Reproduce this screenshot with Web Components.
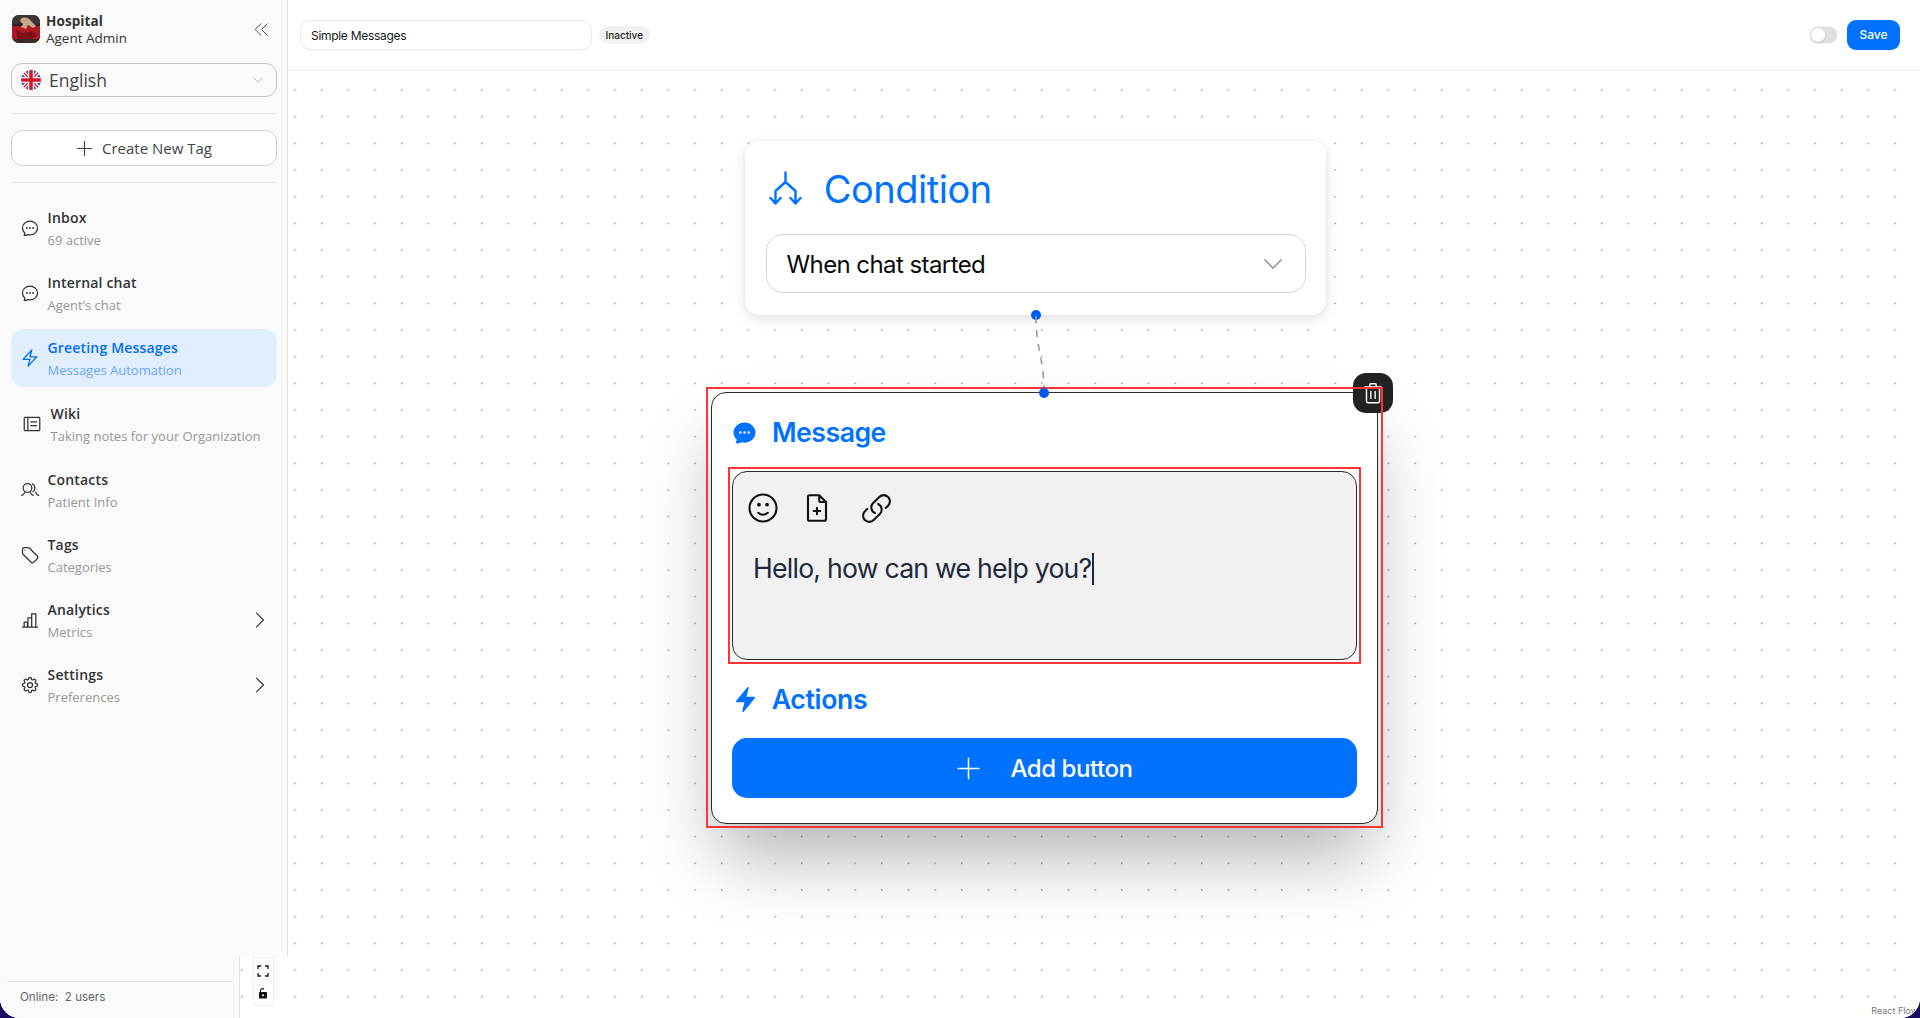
<!DOCTYPE html>
<html lang="en">
<head>
<meta charset="utf-8">
<title>Greeting Messages</title>
<style>
  html, body { margin: 0; height: 100%; background: #160a5e; overflow: hidden; }
</style>
</head>
<body>
<app-shell>
  <flow-canvas slot="canvas">
    <condition-node></condition-node>
    <message-node>Hello, how can we help you?</message-node>
  </flow-canvas>
  <side-bar slot="side">
    <nav-item><ui-icon slot="icon" name="chat"></ui-icon>Inbox<span slot="sub">69 active</span></nav-item>
    <nav-item><ui-icon slot="icon" name="chat"></ui-icon>Internal chat<span slot="sub">Agent’s chat</span></nav-item>
    <nav-item active><ui-icon slot="icon" name="bolt"></ui-icon>Greeting Messages<span slot="sub">Messages Automation</span></nav-item>
    <nav-item wide><ui-icon slot="icon" name="book"></ui-icon>Wiki<span slot="sub">Taking notes for your Organization</span></nav-item>
    <nav-item><ui-icon slot="icon" name="users"></ui-icon>Contacts<span slot="sub">Patient Info</span></nav-item>
    <nav-item><ui-icon slot="icon" name="tag"></ui-icon>Tags<span slot="sub">Categories</span></nav-item>
    <nav-item more><ui-icon slot="icon" name="chart"></ui-icon>Analytics<span slot="sub">Metrics</span></nav-item>
    <nav-item more><ui-icon slot="icon" name="cog"></ui-icon>Settings<span slot="sub">Preferences</span></nav-item>
  </side-bar>
  <side-footer slot="foot">Online:&nbsp; 2 users</side-footer>
  <flow-controls slot="controls"></flow-controls>
  <top-bar slot="top"></top-bar>
</app-shell>

<script>
// outline and solid icons, all on a 24 box
const ICONS = {
  chat: '<path d="M8.625 12a.375.375 0 1 1-.75 0 .375.375 0 0 1 .75 0Zm0 0H8.25m4.125 0a.375.375 0 1 1-.75 0 .375.375 0 0 1 .75 0Zm0 0H12m4.125 0a.375.375 0 1 1-.75 0 .375.375 0 0 1 .75 0Zm0 0h-.375M21 12c0 4.556-4.03 8.25-9 8.25a9.764 9.764 0 0 1-2.555-.337A5.972 5.972 0 0 1 5.41 20.97a5.969 5.969 0 0 1-.474-.065 4.48 4.48 0 0 0 .978-2.025c.09-.457-.133-.901-.467-1.226C3.93 16.178 3 14.189 3 12c0-4.556 4.03-8.25 9-8.25s9 3.694 9 8.25Z"/>',
  bolt: '<path d="m3.75 13.5 10.5-11.25L12 10.5h8.25L9.75 21.75 12 13.5H3.75Z"/>',
  book: '<path d="M3.5 4h17a.8.8 0 0 1 .8.8v14.4a.8.8 0 0 1-.8.8h-17a.8.8 0 0 1-.8-.8V4.800a.8.8 0 0 1 .8-.8ZM7 4v16M10.500 9.500h7M10.500 14h7"/>',
  users: '<circle cx="9" cy="9.500" r="5.200"/><path d="M14.800 4.700a5.200 5.200 0 0 1 .6 9.300M2 18.500c1.500-.4 3-1.500 3.800-4M16 18.500c-1.500-.4-3-1.500-3.800-4M22.500 18.500c-1.500-.4-3-1.500-3.800-4"/>',
  tag: '<path d="M9.568 3H5.250A2.250 2.250 0 0 0 3 5.250v4.318c0 .597.237 1.170.659 1.591l9.581 9.581c.699.699 1.780.872 2.607.330a18.095 18.095 0 0 0 5.223-5.223c.542-.827.369-1.908-.330-2.607L11.160 3.660A2.250 2.250 0 0 0 9.568 3Z"/><path d="M6 6h.008v.008H6V6Z"/>',
  chart: '<path d="M3 20.500h18M5 20.500v-6h4v6M9.500 20.500V9.500h4.500v11M14 20.500V4.500h5v16"/>',
  cog: '<path d="M10.343 3.940c.09-.542.56-.94 1.110-.94h1.093c.55 0 1.020.398 1.110.94l.149.894c.07.424.384.764.78.93.398.164.855.142 1.205-.108l.737-.527a1.125 1.125 0 0 1 1.450.120l.773.774c.39.389.44 1.002.12 1.450l-.527.737c-.25.35-.272.806-.107 1.204.165.397.505.71.93.78l.893.15c.543.09.94.56.94 1.109v1.094c0 .55-.397 1.020-.94 1.110l-.893.149c-.425.07-.765.383-.93.78-.165.398-.143.854.107 1.204l.527.738c.32.447.269 1.060-.12 1.450l-.774.773a1.125 1.125 0 0 1-1.449.120l-.738-.527c-.35-.25-.806-.272-1.203-.107-.397.165-.71.505-.781.929l-.149.894c-.09.542-.56.94-1.110.94h-1.094c-.55 0-1.019-.398-1.110-.94l-.148-.894c-.071-.424-.384-.764-.781-.93-.398-.164-.854-.142-1.204.108l-.738.527c-.447.32-1.060.269-1.450-.120l-.773-.774a1.125 1.125 0 0 1-.12-1.450l.527-.737c.25-.35.273-.806.108-1.204-.165-.397-.505-.71-.93-.78l-.894-.15c-.542-.09-.94-.56-.94-1.109v-1.094c0-.55.398-1.020.94-1.110l.894-.149c.424-.07.765-.383.93-.78.165-.398.143-.854-.107-1.204l-.527-.738a1.125 1.125 0 0 1 .12-1.450l.773-.773a1.125 1.125 0 0 1 1.450-.12l.737.527c.35.25.807.272 1.204.107.397-.165.71-.505.78-.929l.15-.894Z"/><path d="M15 12a3 3 0 1 1-6 0 3 3 0 0 1 6 0Z"/>',
  plus: '<path d="M12 4.500v15m7.500-7.500h-15"/>',
  smile: '<path d="M15.182 15.182a4.500 4.500 0 0 1-6.364 0M21 12a9 9 0 1 1-18 0 9 9 0 0 1 18 0Z"/><circle cx="9.300" cy="9.750" r=".55" fill="currentColor"/><circle cx="14.700" cy="9.750" r=".55" fill="currentColor"/>',
  file: '<path d="M13.500 3.500H7A1 1 0 0 0 6 4.500v15a1 1 0 0 0 1 1h10a1 1 0 0 0 1-1V8l-4.500-4.500ZM13.500 3.500V7a1 1 0 0 0 1 1H18M12 11.800v4.400M9.800 14h4.400"/>',
  link: '<path d="M13.190 8.688a4.500 4.500 0 0 1 1.242 7.244l-4.500 4.500a4.500 4.500 0 0 1-6.364-6.364l1.757-1.757m13.350-.622 1.757-1.757a4.500 4.500 0 0 0-6.364-6.364l-4.500 4.500a4.500 4.500 0 0 0 1.242 7.244"/>',
  trash: '<path d="M4.500 6.500h15M9 6.500V4.800c0-.7.5-1.300 1.200-1.300h3.600c.7 0 1.200.6 1.200 1.300v1.700M6 6.500v13.200c0 .7.5 1.300 1.200 1.300h9.600c.7 0 1.200-.6 1.200-1.300V6.500M10 10.500v6.500M14 10.500v6.500"/>',
  right: '<path d="m8.250 4.500 7.500 7.500-7.500 7.500"/>',
  down: '<path d="m4.500 8.250 7.500 7.500 7.500-7.500"/>',
  collapse: '<path d="M11 5 4 12l7 7M19 5l-7 7 7 7"/>'
};

class UiIcon extends HTMLElement {
  connectedCallback() {
    const size = this.getAttribute('size') || 20;
    const stroke = this.getAttribute('stroke') || 1.5;
    this.attachShadow({ mode: 'open' }).innerHTML = `
      <style>:host { display: inline-flex; flex: none; } svg { display: block; }</style>
      <svg width="${size}" height="${size}" viewBox="0 0 24 24" fill="none" stroke="currentColor"
        stroke-width="${stroke}" stroke-linecap="round" stroke-linejoin="round">${ICONS[this.getAttribute('name')]}</svg>`;
  }
}

class AppShell extends HTMLElement {
  constructor() {
    super();
    this.attachShadow({ mode: 'open' }).innerHTML = `
      <style>
        :host {
          display: grid;
          grid-template-columns: 288px 1fr;
          position: relative;
          width: 1920px;
          height: 1018px;
          overflow: hidden;
          border-radius: 0 0 20px 20px;
          background: #fff;
        }
        .left, .right { position: relative; z-index: 1; min-width: 0; }
        .left { display: flex; flex-direction: column; height: 1018px; }
        .under { display: flex; flex: 1; }
      </style>
      <slot name="canvas"></slot>
      <div class="left">
        <slot name="side"></slot>
        <div class="under">
          <slot name="foot"></slot>
          <slot name="controls"></slot>
        </div>
      </div>
      <div class="right"><slot name="top"></slot></div>`;
  }
}

class SideBar extends HTMLElement {
  constructor() {
    super();
    this.attachShadow({ mode: 'open' }).innerHTML = `
      <style>
        :host {
          display: flex;
          flex-direction: column;
          box-sizing: border-box;
          height: 957px;
          padding: 15px 10px 0 11px;
          background: #fafafa;
          border-right: 1px solid #e4e4e4;
          font-family: "Open Sans", sans-serif;
          color: #333;
        }
        .brand { display: flex; align-items: center; height: 28px; gap: 6px; padding-left: 1px; }
        .brand svg.avatar { display: block; flex: none; }
        .who { display: flex; flex-direction: column; flex: 1; font-size: 13.5px; line-height: 17px; margin-top: 2px; }
        .who b { font-weight: 700; letter-spacing: .1px; }
        .collapse { color: #333; margin-right: 6px; }
        .lang {
          display: flex;
          align-items: center;
          box-sizing: border-box;
          height: 34px;
          margin-top: 20px;
          padding: 0 11px 0 9px;
          border: 1px solid #c8c8c8;
          border-radius: 11px;
          font-size: 17.5px;
          font-weight: 500;
          gap: 8px;
          color: #444;
        }
        .lang span { flex: 1; }
        .lang ui-icon { color: #a9a9a9; }
        hr { border: 0; border-top: 1px solid #e9e9e9; margin: 16px 0; width: 100%; }
        .create {
          display: flex;
          align-items: center;
          justify-content: center;
          box-sizing: border-box;
          height: 36px;
          padding-right: 3px;
          gap: 6px;
          background: #fff;
          border: 1px solid #cfcfcf;
          border-radius: 11px;
          font-size: 15px;
          font-weight: 500;
          color: #444;
        }
        .nav { display: flex; flex-direction: column; gap: 7px; }
      </style>
      <div class="brand">
        <svg class="avatar" width="28" height="28" viewBox="0 0 28 28">
          <defs><clipPath id="av"><rect width="28" height="28" rx="7"/></clipPath></defs>
          <g clip-path="url(#av)">
            <rect width="28" height="28" fill="#2a1c1c"/>
            <rect y="11" width="28" height="13" fill="#b01822"/>
            <path d="M0 0h28v9l-8 2-10-3-10 2z" fill="#3d3434"/>
            <path d="M9 4c3-3 8-1 10 2l5 5-3 2-5-3-2 4-5-2 2-3-3-3z" fill="#c9a58c"/>
            <path d="M3 14l8 4 9-2 5 4-6 5H6z" fill="#7d1018"/>
            <rect y="24" width="28" height="4" fill="#3b2a26"/>
          </g>
        </svg>
        <div class="who"><b>Hospital</b><span>Agent Admin</span></div>
        <ui-icon class="collapse" name="collapse" size="19" stroke="1.1"></ui-icon>
      </div>
      <div class="lang">
        <svg width="20" height="20" viewBox="0 0 20 20">
          <defs><clipPath id="fl"><circle cx="10" cy="10" r="10"/></clipPath></defs>
          <g clip-path="url(#fl)">
            <rect width="20" height="20" fill="#2a50a8"/>
            <path d="M0 0l20 20M20 0L0 20" stroke="#fff" stroke-width="4"/>
            <path d="M0 0l20 20M20 0L0 20" stroke="#d8152f" stroke-width="1.400"/>
            <path d="M10 0v20M0 10h20" stroke="#fff" stroke-width="6"/>
            <path d="M10 0v20M0 10h20" stroke="#d8152f" stroke-width="3.600"/>
          </g>
        </svg>
        <span>English</span>
        <ui-icon name="down" size="14" stroke="1.4"></ui-icon>
      </div>
      <hr>
      <div class="create"><ui-icon name="plus" size="23" stroke="1.2"></ui-icon>Create New Tag</div>
      <hr>
      <div class="nav"><slot></slot></div>`;
  }
}

class NavItem extends HTMLElement {
  constructor() {
    super();
    this.attachShadow({ mode: 'open' }).innerHTML = `
      <style>
        :host {
          display: flex;
          align-items: center;
          box-sizing: border-box;
          height: 58px;
          padding: 0 6px 0 9px;
          gap: 7.500px;
          border-radius: 12px;
          color: #333;
        }
        :host([wide]) { margin: 1px 0; padding-left: 11px; gap: 8.500px; }
        :host([active]) { background: #e0eeff; color: #006fee; }
        .text { display: flex; flex-direction: column; flex: 1; min-width: 0; font-size: 14px; font-weight: 550; letter-spacing: .18px; line-height: 22px; margin-top: 1px; }
        .sub { font-size: 13px; font-weight: 400; letter-spacing: 0; color: #979797; }
        :host([active]) .sub { color: #68a6f7; }
        .more { display: none; color: #333; }
        :host([more]) .more { display: block; }
      </style>
      <slot name="icon"></slot>
      <div class="text"><slot></slot><div class="sub"><slot name="sub"></slot></div></div>
      <ui-icon class="more" name="right" size="22" stroke="1.200"></ui-icon>`;
  }
}

class SideFooter extends HTMLElement {
  constructor() {
    super();
    this.attachShadow({ mode: 'open' }).innerHTML = `
      <style>
        :host {
          display: block;
          box-sizing: border-box;
          width: 240px;
          height: 61px;
          padding: 24px 6px 0 7px;
          background: #fafafa;
          border-right: 1px solid #e4e4e4;
          font: 11.600px Inter, sans-serif;
          color: #666;
        }
        div { border-top: 1px solid #e6e6e6; padding: 4px 0 0 13px; line-height: 22px; }
      </style>
      <div><slot></slot></div>`;
  }
}

class FlowControls extends HTMLElement {
  constructor() {
    super();
    this.attachShadow({ mode: 'open' }).innerHTML = `
      <style>
        :host {
          display: flex;
          flex-direction: column;
          box-sizing: border-box;
          width: 22px;
          height: 49px;
          margin-left: 12px;
          background: #fefefe;
          border: solid #f1f1f1;
          border-width: 0 1px 1px 1px;
          border-radius: 0 0 3px 3px;
        }
        div { display: flex; align-items: center; justify-content: center; box-sizing: border-box; height: 22px; padding-top: 4px; border-top: 1px solid #f1f1f1; }
        div:first-child { margin-top: 4px; }
      </style>
      <div><svg width="12" height="12" viewBox="0 0 12 12" fill="none" stroke="#111" stroke-width="1.300" stroke-linecap="round"><path d="M1 3.500V1h2.500M8.500 1H11v2.500M11 8.500V11H8.500M3.500 11H1V8.500"/></svg></div>
      <div><svg width="10" height="12" viewBox="0 0 10 12"><path d="M2.500 5V3.500A2 2 0 0 1 6 2.300" fill="none" stroke="#111" stroke-width="1.100"/><rect x="1" y="5" width="8" height="6.500" rx=".8" fill="#111"/><circle cx="5" cy="8.200" r="1" fill="#fff"/></svg></div>`;
  }
}

class TopBar extends HTMLElement {
  constructor() {
    super();
    this.attachShadow({ mode: 'open' }).innerHTML = `
      <style>
        :host {
          display: flex;
          align-items: center;
          box-sizing: border-box;
          height: 71px;
          padding: 0 20px 0 12px;
          background: #fff;
          border-bottom: 1px solid #ececec;
          font-family: Inter, sans-serif;
        }
        .name {
          box-sizing: border-box;
          width: 292px;
          height: 30px;
          padding: 1px 10px 0;
          line-height: 28px;
          border: 1px solid #e9e9e9;
          border-radius: 10px;
          box-shadow: 0 1px 2px rgba(0,0,0,.03);
          font-size: 12px;
          letter-spacing: -.3px;
          color: #18181b;
        }
        .badge {
          margin-left: 7px;
          padding: 0 6.500px;
          height: 18px;
          line-height: 18px;
          border-radius: 9px;
          background: #f1f1f2;
          font-size: 10px;
          font-weight: 500;
          color: #222;
        }
        .grow { flex: 1; }
        .switch { position: relative; width: 27px; height: 16px; border-radius: 8px; background: #dfdfe1; box-shadow: 0 0 0 1px #f2f2f2; }
        .switch::after { content: ""; position: absolute; left: 1px; top: 1px; width: 14px; height: 14px; border-radius: 50%; background: #fff; box-shadow: 0 1px 2px rgba(0,0,0,.15); }
        .save {
          margin-left: 10px;
          width: 53px;
          height: 30px;
          line-height: 30px;
          text-align: center;
          border-radius: 9px;
          background: #0072ff;
          color: #fff;
          font-size: 12px;
          font-weight: 500;
        }
      </style>
      <div class="name">Simple Messages</div>
      <div class="badge">Inactive</div>
      <div class="grow"></div>
      <div class="switch"></div>
      <div class="save">Save</div>`;
  }
}

class FlowCanvas extends HTMLElement {
  constructor() {
    super();
    this.attachShadow({ mode: 'open' }).innerHTML = `
      <style>
        :host { position: absolute; inset: 0; background: #fff; font-family: Inter, sans-serif; }
        svg { position: absolute; inset: 0; }
        .credit {
          position: absolute;
          right: 2px;
          bottom: 1px;
          padding: 2px 0 1px 4px;
          background: rgba(255,255,255,.6);
          font-size: 9px;
          color: #777;
        }
      </style>
      <svg width="1920" height="1018">
        <defs>
          <pattern id="dots" x="0" y="0" width="26.667" height="26.667" patternUnits="userSpaceOnUse">
            <circle cx="1.667" cy="10" r=".9" fill="#9a9a9f"/>
          </pattern>
        </defs>
        <rect width="1920" height="1018" fill="url(#dots)"/>
      </svg>
      <slot></slot>
      <svg width="1920" height="1018" style="pointer-events:none">
        <path d="M1036 316 C1036 350 1044 358 1044 392" fill="none" stroke="#9a9a9f" stroke-width="1.600" stroke-dasharray="7 7"/>
      </svg>
      <div class="credit">React Flow</div>`;
  }
}

class ConditionNode extends HTMLElement {
  constructor() {
    super();
    this.attachShadow({ mode: 'open' }).innerHTML = `
      <style>
        :host {
          position: absolute;
          left: 745px;
          top: 141px;
          box-sizing: border-box;
          width: 581px;
          height: 174px;
          padding: 0 20.500px;
          background: #fff;
          border-radius: 14px;
          box-shadow: 0 4px 14px rgba(0,0,0,.11), 0 0 4px rgba(0,0,0,.05);
        }
        .head { display: flex; align-items: center; height: 93px; padding: 2px 0 0 3px; box-sizing: border-box; gap: 22.300px; color: #0072ff; font-size: 38px; letter-spacing: -.5px; }
        .head svg { display: block; flex: none; margin-top: -1px; }
        .select {
          display: flex;
          align-items: center;
          justify-content: space-between;
          box-sizing: border-box;
          height: 59px;
          padding: 2px 19px 0 20px;
          border: 1px solid #d6d6d8;
          border-radius: 17px;
          font-size: 24px;
          letter-spacing: -.58px;
          color: #0a0a0a;
        }
        .select ui-icon { color: #a1a1aa; margin-top: -2px; }
        .handle { position: absolute; left: 285.500px; bottom: -5px; width: 10px; height: 10px; border-radius: 50%; background: #0058f5; }
      </style>
      <div class="head">
        <svg width="33" height="34" viewBox="0 0 33 34" fill="none" stroke="currentColor" stroke-width="2.400" stroke-linecap="round" stroke-linejoin="round">
          <path d="M16.500 1.500v9.500M16.500 11 6.500 20v12M16.500 11l10 9v12M1.500 27l5 5.500 5-5.500M21.500 27l5 5.500 5-5.500"/>
        </svg>
        Condition
      </div>
      <div class="select">When chat started<ui-icon name="down" size="26" stroke="1.600"></ui-icon></div>
      <div class="handle"></div>`;
  }
}

class MessageNode extends HTMLElement {
  constructor() {
    super();
    this.attachShadow({ mode: 'open' }).innerHTML = `
      <style>
        :host {
          position: absolute;
          left: 706px;
          top: 387px;
          box-sizing: border-box;
          width: 677px;
          height: 441px;
          padding: 5px 5px 4px 5px;
        }
        :host::after {
          content: "";
          position: absolute;
          inset: 0;
          border: 2px solid #ff3434;
          z-index: 3;
        }
        .card {
          display: flex;
          flex-direction: column;
          box-sizing: border-box;
          height: 100%;
          padding: 21px 16px 25px;
          background: #fff;
          border: 1px solid #2a2a2a;
          border-radius: 15px;
          box-shadow: 0 40px 72px -8px rgba(0,0,0,.3);
        }
        .head { display: flex; align-items: center; height: 36px; padding-left: 3px; gap: 14px; color: #0072ff; font-size: 26.670px; font-weight: 600; letter-spacing: -.5px; }
        .head svg { display: block; flex: none; }
        .head.actions { margin-top: 17px; padding-left: 7.700px; gap: 17px; letter-spacing: -.35px; }
        .editor-box { margin-top: 17px; height: 197px; box-sizing: border-box; padding: 2px; border: 2px solid #ff3434; }
        .editor {
          box-sizing: border-box;
          height: 100%;
          padding: 18px 12px 0;
          background: #f1f1f2;
          border: 1px solid #2a2a2a;
          border-radius: 15px;
          color: #111;
        }
        .tools { display: flex; align-items: center; height: 36px; gap: 17.500px; }
        .tools ui-icon:last-child { margin-left: 8px; }
        .text { margin: 22px 0 0 8px; font-size: 26.670px; line-height: 40px; letter-spacing: -.78px; color: #1e293b; white-space: nowrap; }
        .caret { display: inline-block; width: 2px; height: 32px; margin-left: 1px; background: #1e293b; vertical-align: -7px; }
        .add {
          display: flex;
          align-items: center;
          justify-content: center;
          height: 60px;
          margin: 21px 4px 0;
          padding-right: 4px;
          gap: 25px;
          background: #0072ff;
          border-radius: 15px;
          color: #fff;
          font-size: 24px;
          font-weight: 500;
          letter-spacing: -.45px;
        }
        .trash {
          position: absolute;
          left: 647px;
          top: -14px;
          display: flex;
          align-items: center;
          justify-content: center;
          width: 40px;
          height: 40px;
          border-radius: 13px;
          background: #222;
          color: #fff;
          z-index: 2;
        }
        .handle { position: absolute; left: 333px; top: 1px; width: 10px; height: 10px; border-radius: 50%; background: #0058f5; z-index: 4; }
      </style>
      <div class="card">
        <div class="head">
          <svg width="27" height="27" viewBox="0 0 24 24" fill="currentColor"><path fill-rule="evenodd" d="M4.804 21.644A6.707 6.707 0 0 0 6 21.750a6.721 6.721 0 0 0 3.583-1.029c.774.182 1.584.279 2.417.279 5.322 0 9.750-3.970 9.750-9 0-5.030-4.428-9-9.750-9s-9.750 3.970-9.750 9c0 2.409 1.025 4.587 2.674 6.192.232.226.277.428.254.543a3.730 3.730 0 0 1-.814 1.686.750.750 0 0 0 .44 1.223ZM8.250 10.875a1.125 1.125 0 1 0 0 2.250 1.125 1.125 0 0 0 0-2.250ZM10.875 12a1.125 1.125 0 1 1 2.250 0 1.125 1.125 0 0 1-2.250 0Zm4.875-1.125a1.125 1.125 0 1 0 0 2.250 1.125 1.125 0 0 0 0-2.250Z"/></svg>
          Message
        </div>
        <div class="editor-box">
          <div class="editor">
            <div class="tools">
              <ui-icon name="smile" size="36" stroke="1.400"></ui-icon>
              <ui-icon name="file" size="36" stroke="1.400"></ui-icon>
              <ui-icon name="link" size="33" stroke="1.500"></ui-icon>
            </div>
            <div class="text"><slot></slot><span class="caret"></span></div>
          </div>
        </div>
        <div class="head actions">
          <svg width="19" height="25" viewBox="3 1.500 18 21" fill="currentColor" preserveAspectRatio="none"><path d="M14.615 1.595a.750.750 0 0 1 .359.852L12.982 9.750h7.268a.750.750 0 0 1 .548 1.262l-10.500 11.250a.750.750 0 0 1-1.272-.71l1.992-7.302H3.750a.750.750 0 0 1-.548-1.262l10.500-11.250a.750.750 0 0 1 .913-.143Z"/></svg>
          Actions
        </div>
        <div class="add"><ui-icon name="plus" size="33" stroke="1.100"></ui-icon>Add button</div>
      </div>
      <div class="trash"><ui-icon name="trash" size="26" stroke="1.300"></ui-icon></div>
      <div class="handle"></div>`;
  }
}

customElements.define('ui-icon', UiIcon);
customElements.define('app-shell', AppShell);
customElements.define('side-bar', SideBar);
customElements.define('nav-item', NavItem);
customElements.define('side-footer', SideFooter);
customElements.define('flow-controls', FlowControls);
customElements.define('top-bar', TopBar);
customElements.define('flow-canvas', FlowCanvas);
customElements.define('condition-node', ConditionNode);
customElements.define('message-node', MessageNode);
</script>
</body>
</html>
